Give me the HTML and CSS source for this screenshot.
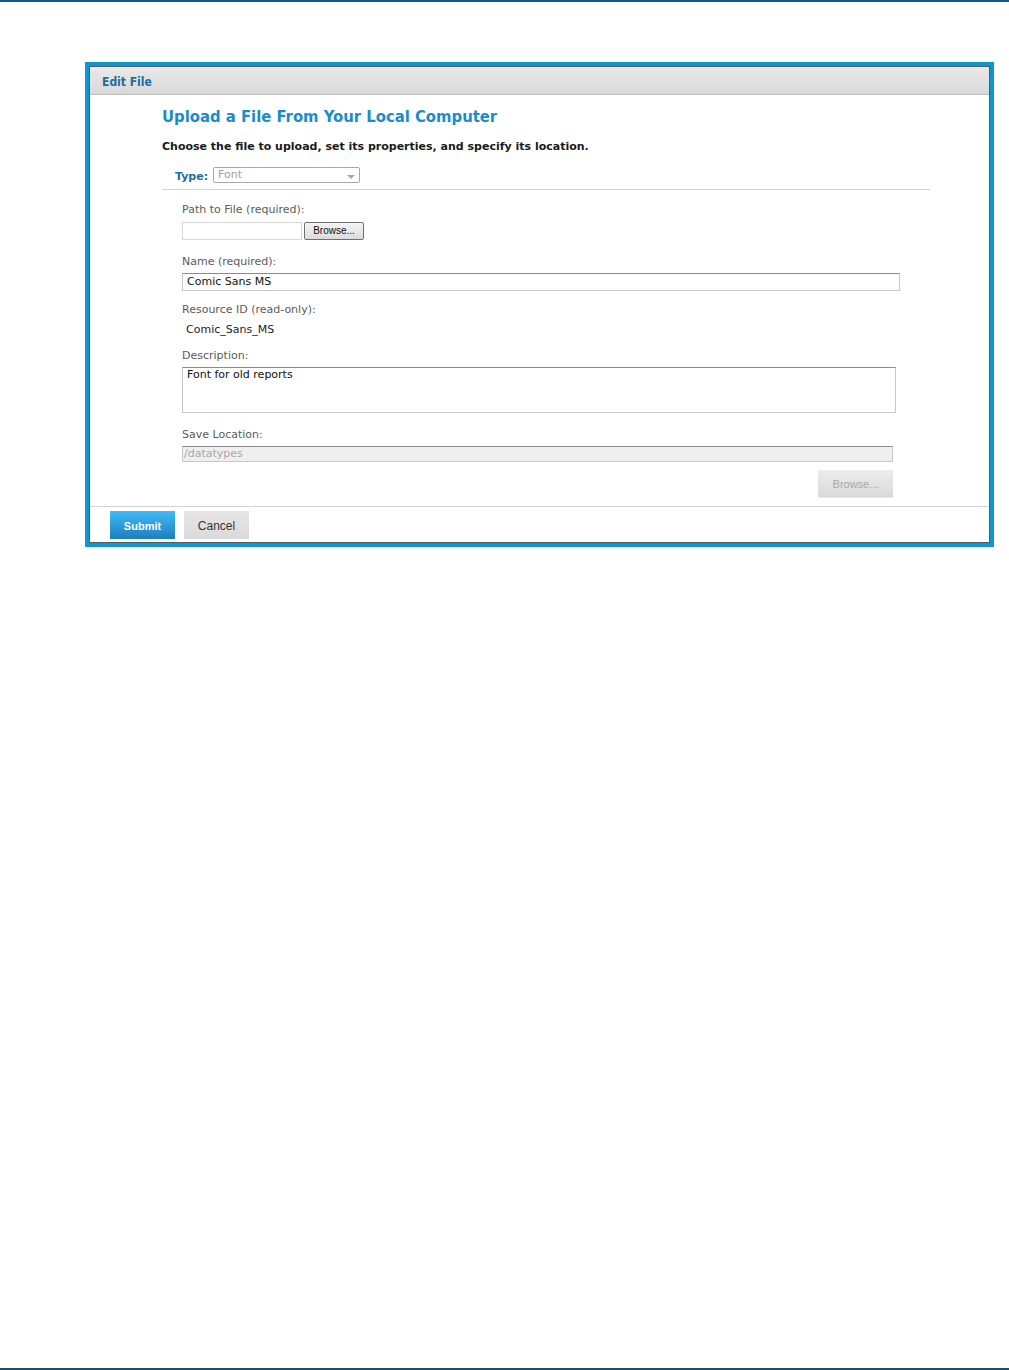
FILE: index.html
```html
<!DOCTYPE html>
<html>
<head>
<meta charset="utf-8">
<link rel="stylesheet" href="styles.css">
</head>
<body>
<div class="page">
  <div class="rule-top"></div>
  <div class="window">
    <div class="window-inner">
      <div class="win-header">Edit File</div>
      <div class="win-body">
        <h1 class="title">Upload a File From Your Local Computer</h1>
        <p class="intro">Choose the file to upload, set its properties, and specify its location.</p>
        <div class="type-row">
          <span class="type-label">Type:</span>
          <div class="select"><span>Font</span><span class="caret"></span></div>
        </div>
        <div class="fields">
          <div class="label label-first">Path to File (required):</div>
          <div class="file-row">
            <div class="input file-input"></div>
            <div class="os-btn">Browse...</div>
          </div>
          <div class="label label-name">Name (required):</div>
          <div class="input name-input">Comic Sans MS</div>
          <div class="label">Resource ID (read-only):</div>
          <div class="readonly">Comic_Sans_MS</div>
          <div class="label label-desc">Description:</div>
          <div class="input textarea">Font for old reports</div>
          <div class="label label-save">Save Location:</div>
          <div class="input disabled">/datatypes</div>
          <div class="browse-row"><div class="btn-disabled">Browse...</div></div>
        </div>
      </div>
      <div class="win-footer">
        <div class="btn btn-primary">Submit</div>
        <div class="btn btn-secondary">Cancel</div>
      </div>
    </div>
  </div>
  <div class="rule-bottom"></div>
</div>
</body>
</html>
```
FILE: styles.css
```css
html, body { margin: 0; padding: 0; background: #fff; }
body { font-family: "DejaVu Sans", sans-serif; color: #222; }
.page { height: 1370px; display: flex; flex-direction: column; }
.rule-top { height: 2px; background: #0b5d88; flex: none; }
.rule-bottom { height: 2px; background: #1b4d6e; margin-top: auto; flex: none; }
.window { margin: 60px 0 0 85px; width: 901px; border: 4px solid #0b97d1; flex: none; }
.window-inner { border: 1px solid #5a5a5a; background: #fff; height: 475px; display: flex; flex-direction: column; }
.win-header { height: 27px; flex: none; border-bottom: 1px solid #bdbdbd; background: linear-gradient(#e9e9e9, #d9d9d9); font-family: "DejaVu Sans Condensed", "DejaVu Sans", sans-serif; font-stretch: condensed; font-size: 12px; font-weight: bold; color: #1c6ea4; padding-left: 12px; line-height: 31px; }
.win-body { padding: 0 59px 0 72px; flex: 1; }
.title { margin: 11px 0 0; font-family: "DejaVu Sans Condensed", "DejaVu Sans", sans-serif; font-stretch: condensed; font-size: 16.5px; font-weight: bold; color: #1b8bc9; line-height: 22px; }
.intro { margin: 12px 0 0; font-size: 11px; font-weight: bold; color: #1a1a1a; line-height: 14px; }
.type-row { margin-top: 13px; padding: 0 0 6px 13px; border-bottom: 1px solid #d4d4d4; display: flex; align-items: flex-end; gap: 5px; }
.type-label { font-size: 11px; font-weight: bold; color: #1c6ea4; line-height: 14px; margin-bottom: -1px; }
.select { width: 141px; height: 14px; border: 1px solid #a8a8a8; border-radius: 2px; font-size: 11px; color: #a0a0a0; padding-left: 4px; line-height: 14px; display: flex; justify-content: space-between; align-items: center; box-sizing: content-box; }
.caret { width: 0; height: 0; border-left: 4px solid transparent; border-right: 4px solid transparent; border-top: 4px solid #a8a8a8; margin-right: 4px; margin-top: 3px; }
.fields { padding-left: 20px; }
.label { font-size: 11px; color: #5b5b5b; line-height: 14px; margin-top: 12px; }
.label-first { margin-top: 13px; }
.label-name { margin-top: 15px; }
.label-desc { margin-top: 12px; }
.label-save { margin-top: 15px; }
.file-row { display: flex; gap: 2px; margin-top: 5px; }
.input { border: 1px solid #c8c8c8; border-top-color: #8a8a8a; font-size: 11px; color: #111; line-height: 14px; padding: 1px 4px; box-sizing: border-box; }
.file-input { width: 120px; height: 18px; border-color: #d8d8d8; }
.os-btn { width: 60px; height: 18px; box-sizing: border-box; border: 1px solid #707070; border-radius: 2px; background: linear-gradient(#f4f4f4, #dcdcdc); font-family: "Liberation Sans", sans-serif; font-size: 10px; line-height: 16px; text-align: center; color: #111; }
.name-input { width: 718px; height: 18px; margin-top: 4px; }
.readonly { font-size: 11px; color: #222; line-height: 14px; margin: 6px 0 0 4px; }
.textarea { width: 714px; height: 46px; margin-top: 4px; padding-top: 0; }
.disabled { width: 711px; height: 16px; margin-top: 4px; background: #efefef; color: #a9a9a9; padding: 0 1px; line-height: 14px; }
.browse-row { display: flex; margin-top: 8px; padding-left: 636px; }
.btn-disabled { width: 75px; height: 28px; box-sizing: border-box; background: linear-gradient(#ececec, #dadada); border-bottom: 1px solid #e8e8e8; font-family: "Liberation Sans", sans-serif; font-size: 11px; color: #a8a8a8; text-align: center; line-height: 29px; }
.win-footer { flex: none; border-top: 1px solid #d4d4d4; height: 36px; box-sizing: border-box; padding: 4px 0 0 20px; display: flex; gap: 9px; }
.btn { width: 65px; height: 28px; font-family: "Liberation Sans", sans-serif; font-size: 11px; line-height: 30px; text-align: center; }
.btn-primary { background: linear-gradient(#40bbf7, #1f7dbf); color: #fff; font-weight: bold; }
.btn-secondary { background: linear-gradient(#e6e6e6, #dadada); color: #333; font-size: 12px; }
```
